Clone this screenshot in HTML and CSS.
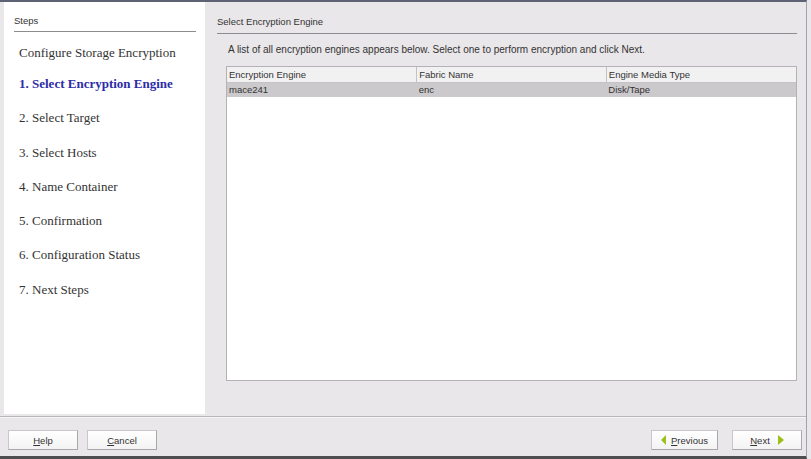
FILE: index.html
```html
<!DOCTYPE html>
<html lang="en">
<head>
    <meta charset="UTF-8">
    <title>Configure Storage Encryption</title>
    <link rel="stylesheet" href="styles.css">
</head>
<body>
    <div class="wizard">
        <div class="wizard-body">
            <div class="steps-panel">
                <div class="panel-title">Steps</div>
                <ul class="steps">
                    <li class="steps-heading">Configure Storage Encryption</li>
                    <li class="active">1. Select Encryption Engine</li>
                    <li>2. Select Target</li>
                    <li>3. Select Hosts</li>
                    <li>4. Name Container</li>
                    <li>5. Confirmation</li>
                    <li>6. Configuration Status</li>
                    <li>7. Next Steps</li>
                </ul>
            </div>

            <div class="content-panel">
                <div class="panel-title">Select Encryption Engine</div>
                <p class="intro">A list of all encryption engines appears below. Select one to perform encryption and click Next.</p>
                <div class="table-box">
                    <table class="engines">
                        <thead>
                            <tr>
                                <th>Encryption Engine</th>
                                <th>Fabric Name</th>
                                <th>Engine Media Type</th>
                            </tr>
                        </thead>
                        <tbody>
                            <tr class="selected">
                                <td>mace241</td>
                                <td>enc</td>
                                <td>Disk/Tape</td>
                            </tr>
                        </tbody>
                    </table>
                </div>
            </div>
        </div>

        <div class="wizard-footer">
            <div class="btn-group">
                <button class="btn"><span><u>H</u>elp</span></button>
                <button class="btn"><span><u>C</u>ancel</span></button>
            </div>
            <div class="btn-group">
                <button class="btn btn-prev"><span class="arrow arrow-left"></span><span><u>P</u>revious</span></button>
                <button class="btn btn-next"><span><u>N</u>ext</span><span class="arrow arrow-right"></span></button>
            </div>
        </div>
    </div>
</body>
</html>
```

FILE: styles.css
```css
* {
    margin: 0;
    padding: 0;
    box-sizing: border-box;
}

body {
    width: 811px;
    height: 459px;
    overflow: hidden;
    background-color: #e9e7e9;
    font-family: 'Liberation Sans', Arial, sans-serif;
    font-size: 9.5px;
    color: #333;
}

.wizard {
    width: 807px;
    height: 459px;
    display: flex;
    flex-direction: column;
    border-top: 2px solid #5d6274;
    border-right: 1px solid #a4a2a6;
    border-bottom: 3px solid #4e4e50;
}

.wizard-body {
    height: 415px;
    display: flex;
    border-bottom: 1px solid #b9b7bb;
}

/* left column with the list of steps */
.steps-panel {
    width: 201px;
    margin-left: 4px;
    margin-bottom: 2px;
    background-color: #fff;
    padding: 11px 9px 0 10px;
}

.panel-title {
    height: 19px;
    padding-top: 2px;
    border-bottom: 1px solid #8e8c90;
}

.steps {
    list-style: none;
    padding-left: 5px;
    margin-top: 9px;
    font-family: 'Liberation Serif', 'Times New Roman', serif;
    font-size: 13px;
    color: #333;
}

.steps li {
    height: 34.3px;
    line-height: 20px;
    padding-top: 2px;
}

.steps li.steps-heading {
    height: 31px;
}

.steps li.active {
    color: #2c2ca8;
    font-weight: bold;
}

/* right column */
.content-panel {
    flex: 1;
    padding: 11px 9px 0 12px;
    display: flex;
    flex-direction: column;
}

.content-panel .panel-title {
    height: 21px;
    padding-top: 3px;
}

.intro {
    margin: 10px 0 0 11px;
    height: 22px;
    font-size: 10px;
}

.table-box {
    margin-left: 9px;
    height: 315px;
    background-color: #fff;
    border: 1px solid #b4b2b6;
}

.engines {
    width: 100%;
    border-collapse: collapse;
    table-layout: fixed;
}

.engines th {
    height: 15px;
    text-align: left;
    font-weight: normal;
    padding-left: 2px;
    background-color: #f2f1f2;
    border-right: 1px solid #c4c2c6;
    border-bottom: 1px solid #c4c2c6;
}

.engines th:last-child {
    border-right: none;
}

.engines td {
    height: 15px;
    padding-left: 2px;
}

.engines tr.selected td {
    background-color: #cbc9cb;
}

/* bottom button bar */
.wizard-footer {
    flex: 1;
    display: flex;
    justify-content: space-between;
    align-items: flex-start;
    padding: 12px 4px 0 8px;
    border-top: 1px solid #f6f5f6;
}

.btn-group {
    display: flex;
    gap: 9px;
}

.btn-group + .btn-group {
    gap: 14px;
}

.btn {
    width: 70px;
    height: 20px;
    font-family: 'Liberation Sans', Arial, sans-serif;
    font-size: 9.5px;
    color: #333;
    background: linear-gradient(#ffffff, #f4f3f4);
    border: 1px solid #c9c7cb;
    border-right-color: #a9a7ab;
    border-bottom-color: #a9a7ab;
    display: flex;
    align-items: center;
    justify-content: center;
    gap: 5px;
}

.btn-prev {
    width: 67px;
}

.arrow {
    width: 0;
    height: 0;
    border-top: 5px solid transparent;
    border-bottom: 5px solid transparent;
}

.arrow-left {
    border-right: 5px solid #9cbf1c;
}

.arrow-right {
    border-left: 6px solid #9cbf1c;
    margin-left: 3px;
}
```
